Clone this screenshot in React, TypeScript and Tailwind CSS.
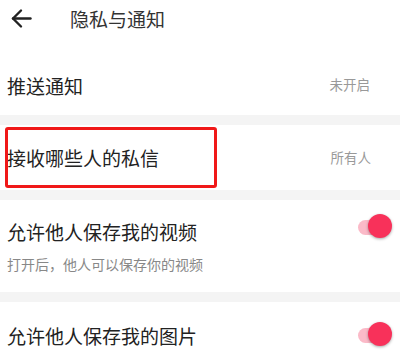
import React from "react";

function Toggle() {
  return (
    <div className="relative w-[34px] h-[26px] shrink-0">
      <div className="absolute left-0 top-[6px] w-[30px] h-[15px] rounded-full bg-[#fbbac8]" />
      <div className="absolute right-0 top-0 w-[24px] h-[24px] rounded-full bg-[#f8315a] shadow-[0_1px_3px_rgba(0,0,0,0.35)]" />
    </div>
  );
}

export default function App() {
  const font = { fontFamily: '"Noto Sans CJK SC", "Noto Sans", sans-serif' };
  return (
    <div className="relative w-[400px] h-[350px] overflow-hidden bg-white text-[#222]" style={font}>
      <div className="flex items-center h-[36px] pl-[11px]">
        <svg width="21" height="21" viewBox="0 0 21 21" fill="none" stroke="#222" strokeWidth="2.4" strokeLinecap="round" strokeLinejoin="round">
          <path d="M2 10.5H19.5" />
          <path d="M10 2.5L2 10.5L10 18.5" />
        </svg>
        <span className="ml-[38px] text-[19px] leading-none text-[#333]">隐私与通知</span>
      </div>
      <div className="h-[19px]" />
      <div className="flex items-center justify-between h-[60px] pl-[7px] pr-[30px]">
        <span className="text-[19px] leading-none">推送通知</span>
        <span className="text-[13.5px] leading-none text-[#999]">未开启</span>
      </div>
      <div className="h-[10px] bg-[#f4f4f4]" />
      <div className="flex items-center justify-between h-[65px] pl-[7px] pr-[29px]">
        <span className="text-[19px] leading-none">接收哪些人的私信</span>
        <span className="text-[13.5px] leading-none text-[#999]">所有人</span>
      </div>
      <div className="h-[10px] bg-[#f4f4f4]" />
      <div className="flex items-start justify-between h-[92px] pl-[7px] pr-[8px] pt-[22px]">
        <div className="flex flex-col">
          <span className="text-[19px] leading-none">允许他人保存我的视频</span>
          <span className="mt-[16px] text-[14px] leading-none text-[#888]">打开后，他人可以保存你的视频</span>
        </div>
        <div className="-mt-[8px]">
          <Toggle />
        </div>
      </div>
      <div className="h-[10px] bg-[#f4f4f4]" />
      <div className="flex items-start justify-between pl-[7px] pr-[8px] pt-[24px]">
        <span className="text-[19px] leading-none">允许他人保存我的图片</span>
        <div className="-mt-[4px]">
          <Toggle />
        </div>
      </div>
      <div className="absolute left-[5px] top-[127px] w-[212px] h-[61px] border-[3px] border-[#f01818] rounded-[3px]" />
    </div>
  );
}
